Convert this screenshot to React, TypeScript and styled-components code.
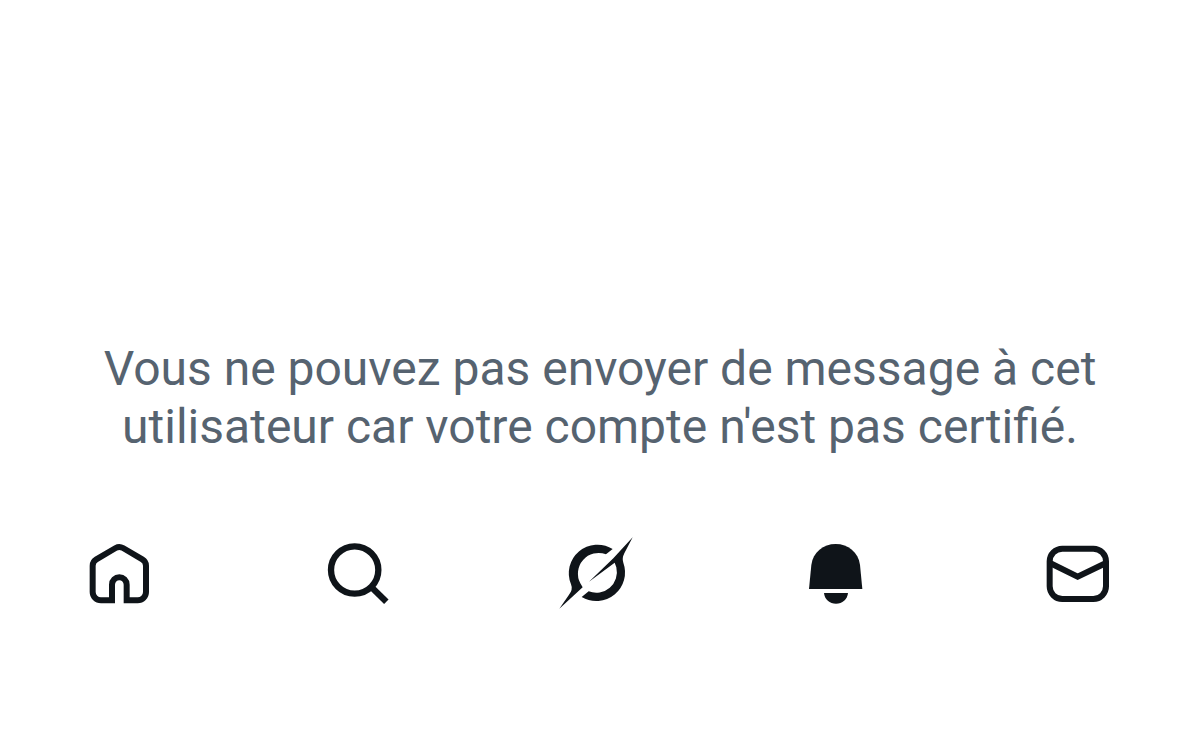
import React from "react";
import styled, { createGlobalStyle } from "styled-components";

const GlobalStyle = createGlobalStyle`
  body {
    margin: 0;
    background: #ffffff;
  }
`;

const Page = styled.main`
  display: flex;
  flex-direction: column;
  gap: 74px;
  padding: 340px 0 120px;
`;

const Notice = styled.p`
  margin: 0;
  padding: 0 80px;
  color: #566370;
  font: 400 48px/58px Roboto, sans-serif;
  text-align: center;
`;

const TabBar = styled.nav`
  display: grid;
  grid-template-columns: repeat(5, 1fr);
  padding-right: 4px;
`;

const Tab = styled.button`
  display: flex;
  justify-content: center;
  padding: 0;
  border: 0;
  background: none;
  color: #0f1419;
  cursor: pointer;
`;

const Icon = styled.svg`
  display: block;
  width: 90px;
  height: 90px;
`;

const tabs = [
  {
    label: "Accueil",
    viewBox: "0 0 270 270",
    art: (
      <path
        d="M111 211V164a22 22 0 0 1 44 0V211H188a25 25 0 0 0 25-25V107a22 22 0 0 0-11-19L144 54a22 22 0 0 0-22 0L64 88a22 22 0 0 0-11 19V186a25 25 0 0 0 25 25Z"
        fill="none"
        stroke="currentColor"
        strokeWidth="18"
      />
    ),
  },
  {
    label: "Recherche",
    viewBox: "-3 0 270 270",
    art: (
      <g fill="none" stroke="currentColor" strokeWidth="19">
        <circle cx="119" cy="120" r="71" />
        <path d="M168 170L214 215" />
      </g>
    ),
  },
  {
    label: "Grok",
    viewBox: "9 0 270 270",
    art: (
      <g fill="currentColor">
        <path d="M188 57L168 73A62 62 0 0 0 91 160L98 172L28 236L56 196Q70 179 63 163A86 86 0 0 1 188 57Z" />
        <path d="M248 22L223 70Q215 86 220 98A86 86 0 0 1 95 201L116 184A62 62 0 0 0 199 112L194 98L117 155L190 85Z" />
      </g>
    ),
  },
  {
    label: "Notifications",
    viewBox: "6 0 270 270",
    art: (
      <g fill="currentColor">
        <path d="M57 177L64 105C69 66 100 42 137 42S205 66 210 105L217 177Z" />
        <path d="M102 189H174C172 209 157 221 138 221S104 209 102 189Z" />
      </g>
    ),
  },
  {
    label: "Messages",
    viewBox: "-3 0 270 270",
    art: (
      <g fill="none" stroke="currentColor" strokeWidth="18">
        <rect x="53" y="56" width="169" height="151" rx="38" />
        <path d="M54 99L137 140L222 99" />
      </g>
    ),
  },
];

export default function App() {
  return (
    <>
      <GlobalStyle />
      <Page>
        <Notice>
          Vous ne pouvez pas envoyer de message à cet utilisateur car votre
          compte n'est pas certifié.
        </Notice>
        <TabBar aria-label="Navigation principale">
          {tabs.map((tab) => (
            <Tab key={tab.label} type="button" aria-label={tab.label}>
              <Icon viewBox={tab.viewBox} aria-hidden="true">
                {tab.art}
              </Icon>
            </Tab>
          ))}
        </TabBar>
      </Page>
    </>
  );
}
